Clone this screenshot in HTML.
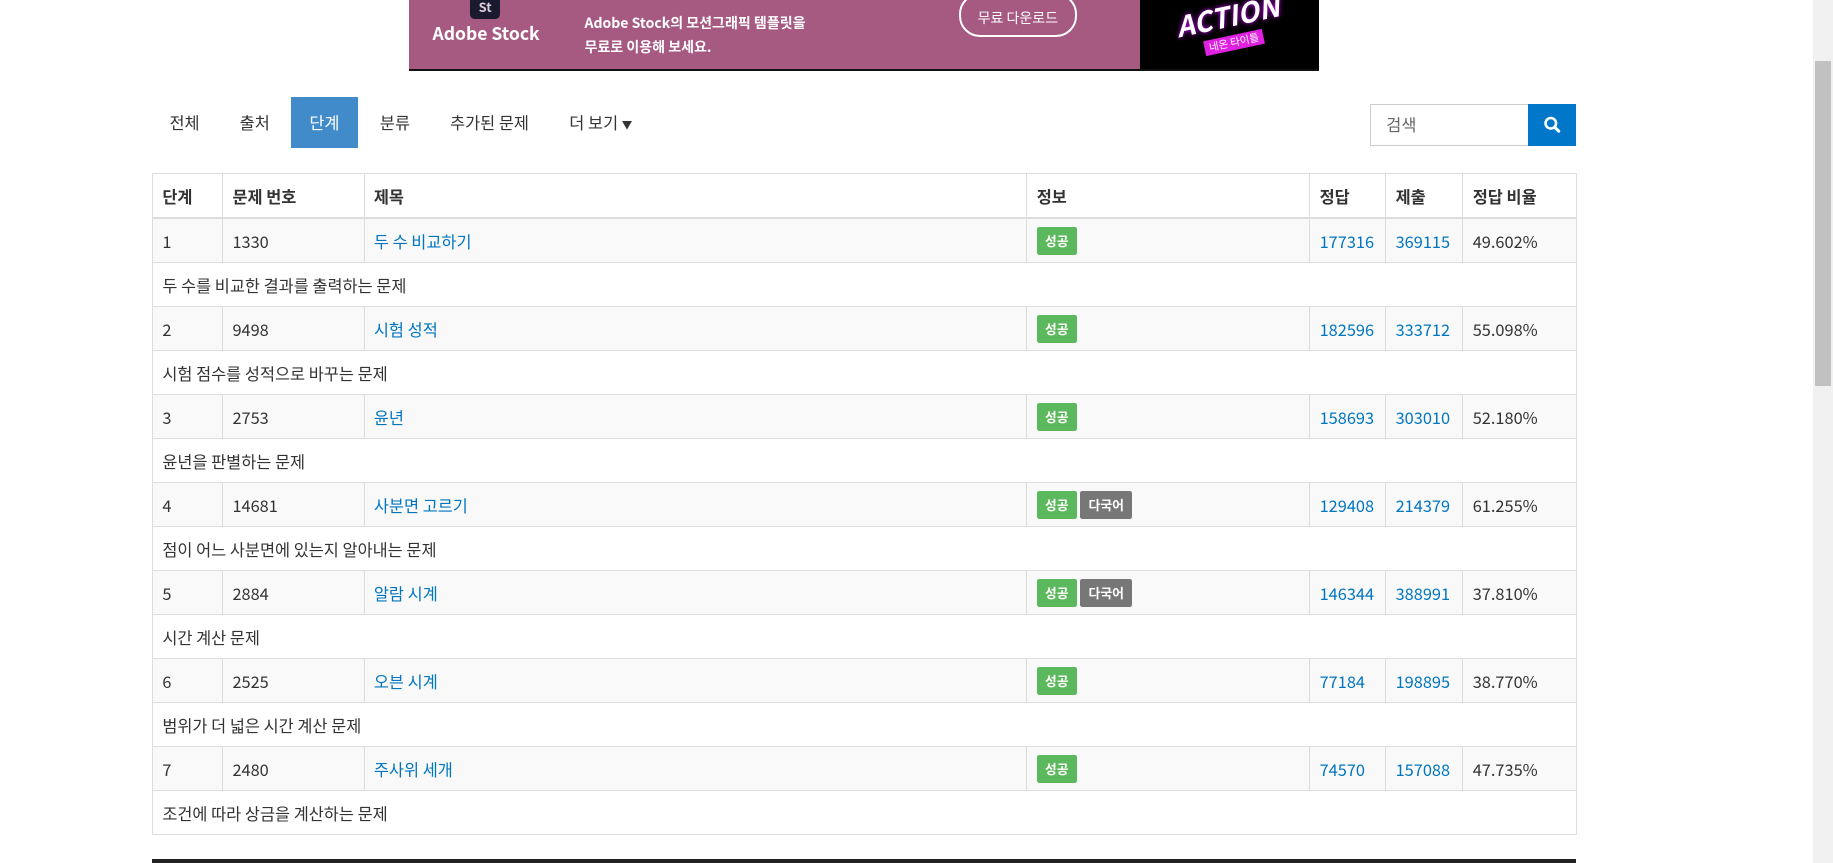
<!DOCTYPE html>
<html><head><meta charset="utf-8">
<style>
html,body{margin:0;padding:0;background:#fff;overflow:hidden}
body{zoom:1.16901;width:1568px;height:738px;position:relative;font-family:"Noto Sans CJK KR","Liberation Sans",sans-serif;font-size:14px;color:#333}
.abs{position:absolute}
a{color:#0076c0;text-decoration:none}
.banner{left:350px;top:0;width:778px;height:61px;background:#a65a82;overflow:hidden}
.banner .blk{position:absolute;left:625px;top:0;width:153px;height:61px;background:#000}
.banner .bb{position:absolute;left:0;bottom:0;width:778px;height:2px;background:#111}
.nav span{position:absolute;top:83px;height:44px;line-height:44px;font-size:14px;color:#333}
table{position:absolute;left:130px;top:148px;width:1218px;border-collapse:collapse;font-size:14px;table-layout:fixed}
td,th{border:1px solid #ddd;padding:0 8px;height:36.8px;text-align:left;white-space:nowrap;overflow:hidden}
th{font-weight:bold;border-bottom:2px solid #ddd;color:#333}
tr.p td{background:#f9f9f9}
.lb{display:inline-block;color:#fff;font-size:11px;font-weight:bold;padding:0 7px;height:24px;line-height:24px;border-radius:2px;vertical-align:middle}
.g{background:#5cb85c}.d{background:#777}
</style></head><body>
<div class="abs banner">
<div class="abs" style="left:52px;top:0;width:26px;height:16px;background:#1a1a2e;border-radius:0 0 4px 4px;color:#dcd;font-size:11px;font-weight:bold;text-align:center;line-height:12px">St</div>
<div class="abs" style="left:20px;top:18px;color:#fff;font-weight:bold;font-size:15px">Adobe Stock</div>
<div class="abs" style="left:150px;top:9px;color:#fff;font-size:12px;line-height:21px;font-weight:bold">Adobe Stock의 모션그래픽 템플릿을<br>무료로 이용해 보세요.</div>
<div class="abs" style="left:470px;top:-6px;width:98px;height:34px;border:2px solid #fff;border-radius:18px;color:#fff;font-size:12px;text-align:center;line-height:40px">무료 다운로드</div>
<div class="blk"><div style="position:absolute;left:30px;top:-4px;color:#fff;font-size:24px;font-weight:bold;font-style:italic;transform:rotate(-12deg);text-shadow:0 0 4px #c0f">ACTION</div><div style="position:absolute;left:55px;top:30px;background:#e020e0;color:#fff;font-size:9px;padding:0 4px;transform:rotate(-12deg)">네온 타이틀</div></div>
<div class="bb"></div>
</div>
<div class="nav">
<span style="left:145px">전체</span>
<span style="left:205px">출처</span>
<span style="left:249px;width:57px;background:#428bca;color:#fff;text-align:center">단계</span>
<span style="left:325px">분류</span>
<span style="left:385px">추가된 문제</span>
<span style="left:487px">더 보기 <span style="position:static;font-size:9px">▼</span></span>
</div>
<div class="abs" style="left:1172px;top:89px;width:134px;height:34px;border:1px solid #ccc;"><span style="position:absolute;left:13px;top:6px;color:#666;font-size:14px">검색</span></div>
<div class="abs" style="left:1307px;top:89px;width:41px;height:36px;background:#0077c8">
<svg width="41" height="36" viewBox="0 0 41 36"><circle cx="19.5" cy="16.5" r="4.5" fill="none" stroke="#fff" stroke-width="2.2"/><path d="M22.8 19.8l3.5 3.5" stroke="#fff" stroke-width="2.6" stroke-linecap="round"/></svg></div>
<table>
<colgroup><col style="width:60px"><col style="width:121px"><col style="width:567px"><col style="width:242px"><col style="width:65px"><col style="width:66px"><col style="width:97px"></colgroup>
<tr><th>단계</th><th>문제 번호</th><th>제목</th><th>정보</th><th>정답</th><th>제출</th><th>정답 비율</th></tr>
<tr class="p"><td>1</td><td>1330</td><td><a>두 수 비교하기</a></td><td><span class="lb g">성공</span></td><td><a>177316</a></td><td><a>369115</a></td><td>49.602%</td></tr>
<tr><td colspan="7">두 수를 비교한 결과를 출력하는 문제</td></tr>
<tr class="p"><td>2</td><td>9498</td><td><a>시험 성적</a></td><td><span class="lb g">성공</span></td><td><a>182596</a></td><td><a>333712</a></td><td>55.098%</td></tr>
<tr><td colspan="7">시험 점수를 성적으로 바꾸는 문제</td></tr>
<tr class="p"><td>3</td><td>2753</td><td><a>윤년</a></td><td><span class="lb g">성공</span></td><td><a>158693</a></td><td><a>303010</a></td><td>52.180%</td></tr>
<tr><td colspan="7">윤년을 판별하는 문제</td></tr>
<tr class="p"><td>4</td><td>14681</td><td><a>사분면 고르기</a></td><td><span class="lb g">성공</span> <span class="lb d">다국어</span></td><td><a>129408</a></td><td><a>214379</a></td><td>61.255%</td></tr>
<tr><td colspan="7">점이 어느 사분면에 있는지 알아내는 문제</td></tr>
<tr class="p"><td>5</td><td>2884</td><td><a>알람 시계</a></td><td><span class="lb g">성공</span> <span class="lb d">다국어</span></td><td><a>146344</a></td><td><a>388991</a></td><td>37.810%</td></tr>
<tr><td colspan="7">시간 계산 문제</td></tr>
<tr class="p"><td>6</td><td>2525</td><td><a>오븐 시계</a></td><td><span class="lb g">성공</span></td><td><a>77184</a></td><td><a>198895</a></td><td>38.770%</td></tr>
<tr><td colspan="7">범위가 더 넓은 시간 계산 문제</td></tr>
<tr class="p"><td>7</td><td>2480</td><td><a>주사위 세개</a></td><td><span class="lb g">성공</span></td><td><a>74570</a></td><td><a>157088</a></td><td>47.735%</td></tr>
<tr><td colspan="7">조건에 따라 상금을 계산하는 문제</td></tr>
</table>
<div class="abs" style="left:130px;top:735px;width:1218px;height:3px;background:#222"></div>
<div class="abs" style="left:1551px;top:0;width:17px;height:738px;background:#f1f1f1"></div>
<div class="abs" style="left:1553px;top:52px;width:13px;height:278px;background:#c1c1c1"></div>
</body></html>
